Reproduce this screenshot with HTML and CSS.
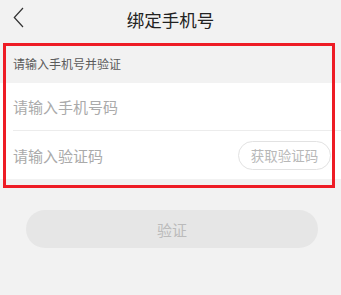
FILE: index.html
```html
<!DOCTYPE html>
<html lang="zh">
<head>
<meta charset="utf-8">
<link rel="stylesheet" href="styles.css">
</head>
<body>
<div class="page">
  <header class="nav">
    <svg class="back" width="12" height="22" viewBox="0 0 12 22"><path d="M10 1 L1.3 10.5 L10 20" fill="none" stroke="#333" stroke-width="1.2"/></svg>
    <h1 class="title">绑定手机号</h1>
  </header>
  <div class="label">请输入手机号并验证</div>
  <div class="rows">
    <div class="row row-first"><span class="ph">请输入手机号码</span></div>
    <div class="row row-code"><span class="ph">请输入验证码</span><span class="code-btn">获取验证码</span></div>
  </div>
  <div class="action"><div class="verify">验证</div></div>
  <div class="highlight"></div>
</div>
</body>
</html>
```
FILE: styles.css
```css
html, body { margin: 0; padding: 0; }
body {
  background: #f2f2f2;
  font-family: "Noto Sans CJK SC", "Noto Sans", sans-serif;
  width: 341px;
  height: 295px;
  overflow: hidden;
}
.page { position: relative; width: 341px; height: 295px; }
.nav {
  height: 43px;
  display: flex;
  align-items: center;
  justify-content: center;
  position: relative;
}
.back { position: absolute; left: 13px; top: 7px; }
.title {
  margin: 0;
  font-size: 17.5px;
  font-weight: normal;
  color: #222;
  line-height: 1;
  padding-bottom: 4px;
}
.label {
  height: 40px;
  display: flex;
  align-items: center;
  padding-left: 13px;
  padding-top: 1px;
  box-sizing: border-box;
  font-size: 12px;
  color: #5a5a5a;
}
.rows { background: #fff; }
.row {
  display: flex;
  align-items: center;
  margin-left: 13px;
  padding-right: 10px;
}
.row-first { height: 47px; border-bottom: 1px solid #ececec; }
.row-code { height: 48px; justify-content: space-between; }
.ph { font-size: 15px; color: #aaa; }
.code-btn {
  width: 93px;
  height: 29px;
  box-sizing: border-box;
  border: 1px solid #e2e2e2;
  border-radius: 15px;
  display: flex;
  align-items: center;
  justify-content: center;
  font-size: 13.5px;
  color: #b8b8b8;
}
.action { padding: 31px 23px 0 26px; }
.verify {
  height: 38px;
  border-radius: 19px;
  background: #e6e6e6;
  display: flex;
  align-items: center;
  justify-content: center;
  font-size: 15px;
  color: #bbb;
}
.highlight {
  position: absolute;
  left: 3px;
  top: 43px;
  width: 332px;
  height: 145px;
  box-sizing: border-box;
  border: 3px solid #ee1c25;
}
```
